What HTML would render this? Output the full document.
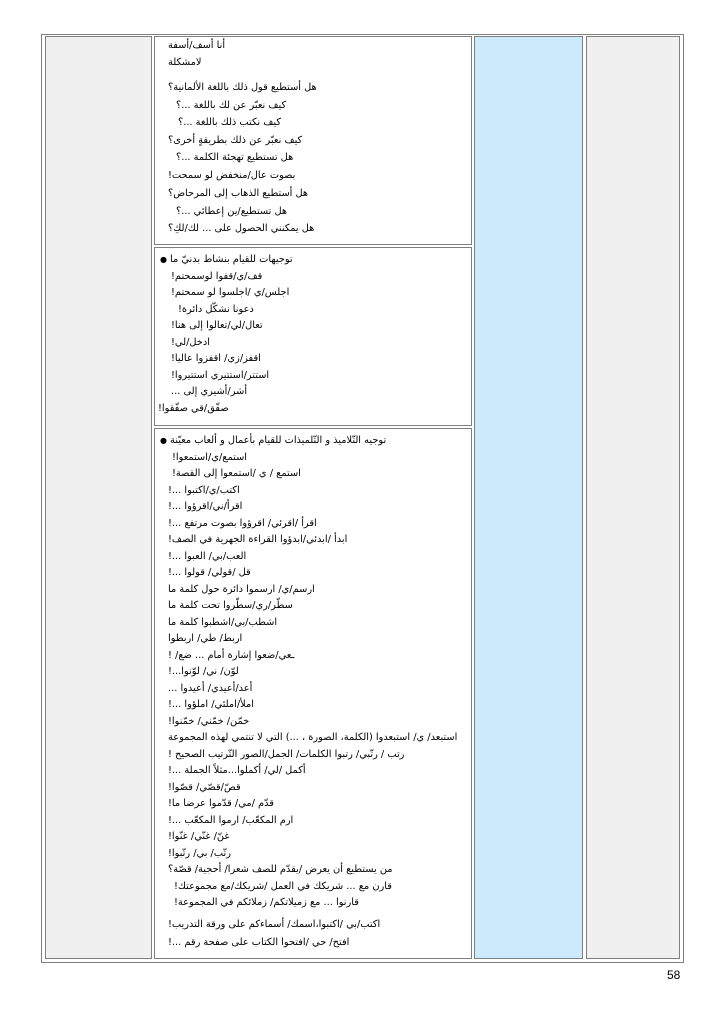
<!DOCTYPE html>
<html><head><meta charset="utf-8"><style>
html,body{margin:0;padding:0;background:#fff;}
body{width:724px;height:1024px;position:relative;overflow:hidden;font-family:"DejaVu Sans","Liberation Sans",sans-serif;}
.b{position:absolute;box-sizing:border-box;border:1px solid #7f7f7f;}
.l{position:absolute;direction:rtl;unicode-bidi:embed;white-space:nowrap;font-size:9.8px;line-height:12px;color:#000;transform:translateY(-6px);}
.dot{position:absolute;font-size:8px;line-height:12px;transform:translateY(-6px);}
</style></head><body>
<div class="b" style="left:41px;top:34px;width:643px;height:929px;"></div>
<div class="b" style="left:45px;top:36px;width:107px;height:923px;background:#f0f0f0;"></div>
<div class="b" style="left:154px;top:36px;width:318px;height:209px;"></div>
<div class="b" style="left:154px;top:247px;width:318px;height:179px;"></div>
<div class="b" style="left:154px;top:428px;width:318px;height:531px;"></div>
<div class="b" style="left:474px;top:36px;width:109px;height:923px;background:#cdeafc;"></div>
<div class="b" style="left:586px;top:36px;width:94px;height:923px;background:#f0f0f0;"></div>

<div class="l" style="left:168px;top:46px">أنا أسف/أسفة</div>
<div class="l" style="left:168px;top:63px">لامشكلة</div>
<div class="l" style="left:168px;top:88px">هل أستطيع قول ذلك باللغة الألمانية؟</div>
<div class="l" style="left:176px;top:105.5px">كيف نعبّر عن لك باللغة ...؟</div>
<div class="l" style="left:178px;top:123px">كيف نكتب ذلك باللغة ...؟</div>
<div class="l" style="left:168px;top:140.5px">كيف نعبّر عن ذلك بطريقةٍ أخرى؟</div>
<div class="l" style="left:176px;top:158px">هل تستطيع تهجئة الكلمة ...؟</div>
<div class="l" style="left:168px;top:175.5px">بصوت عال/منخفض لو سمحت!</div>
<div class="l" style="left:168px;top:194px">هل أستطيع الذهاب إلى المرحاض؟</div>
<div class="l" style="left:176px;top:211.5px">هل تستطيع/ين إعطائي ...؟</div>
<div class="l" style="left:168px;top:229px">هل يمكنني الحصول على ... لك/لكِ؟</div>

<div class="dot" style="left:160px;top:260px">●</div>
<div class="l" style="left:170px;top:260px">توجيهات للقيام بنشاط بدنيّ ما</div>
<div class="l" style="left:171px;top:276.5px">قف/ي/قفوا لوسمحتم!</div>
<div class="l" style="left:171px;top:293px">اجلس/ي /اجلسوا لو سمحتم!</div>
<div class="l" style="left:178px;top:309.5px">دعونا نشكّل دائرة!</div>
<div class="l" style="left:171px;top:326px">تعال/لي/تعالوا إلى هنا!</div>
<div class="l" style="left:171px;top:342.5px">ادخل/لي!</div>
<div class="l" style="left:171px;top:359px">اقفز/زي/ اقفزوا عاليا!</div>
<div class="l" style="left:171px;top:375.5px">استتر/استتيري استتيروا!</div>
<div class="l" style="left:171px;top:392px">أشر/أشيري إلى ...</div>
<div class="l" style="left:158px;top:408.5px">صفّق/قي صفّقوا!</div>

<div class="dot" style="left:160px;top:441px">●</div>
<div class="l" style="left:170px;top:441px">توجيه التّلاميذ و التّلميذات للقيام بأعمال و ألعاب معيّنة</div>
<div class="l" style="left:172px;top:457.5px">استمع/ي/استمعوا!</div>
<div class="l" style="left:172px;top:474px">استمع / ي /استمعوا إلى القصة!</div>
<div class="l" style="left:168px;top:490.5px">اكتب/ي/اكتبوا ...!</div>
<div class="l" style="left:168px;top:507px">اقرأ/ني/اقرؤوا ...!</div>
<div class="l" style="left:168px;top:523.5px">اقرأ /اقرئي/ اقرؤوا بصوت مرتفع ...!</div>
<div class="l" style="left:168px;top:540px">ابدأ /ابدئي/ابدؤوا القراءة الجهرية في الصف!</div>
<div class="l" style="left:168px;top:556.5px">العب/بي/ العبوا ...!</div>
<div class="l" style="left:168px;top:573px">قل /قولي/ قولوا ...!</div>
<div class="l" style="left:168px;top:589.5px">ارسم/ي/ ارسموا دائرة حول كلمة ما</div>
<div class="l" style="left:168px;top:606px">سطّر/ري/سطّروا تحت كلمة ما</div>
<div class="l" style="left:168px;top:622.5px">اشطب/بي/اشطبوا كلمة ما</div>
<div class="l" style="left:168px;top:639px">اربط/ طي/ اربطوا</div>
<div class="l" style="left:168px;top:655.5px">ـعي/ضعوا إشارة أمام ... ضع/ !</div>
<div class="l" style="left:168px;top:672px">لوّن/ ني/ لوّنوا...!</div>
<div class="l" style="left:168px;top:688.5px">أعد/أعيدي/ أعيدوا ...</div>
<div class="l" style="left:168px;top:705px">املأ/املئي/ املؤوا ...!</div>
<div class="l" style="left:168px;top:721.5px">خمّن/ خمّني/ خمّنوا!</div>
<div class="l" style="left:168px;top:738px">استبعد/ ي/ استبعدوا (الكلمة، الصورة ، ...) التي لا تنتمي لهذه المجموعة</div>
<div class="l" style="left:168px;top:754.5px">رتب / رتّبي/ رتبوا الكلمات/ الجمل/الصور التّرتيب الصحيح !</div>
<div class="l" style="left:168px;top:771px">أكمل /لي/ أكملوا...مثلاً الجملة ...!</div>
<div class="l" style="left:168px;top:787.5px">قصّ/قصّي/ قصّوا!</div>
<div class="l" style="left:168px;top:804px">قدّم /مي/ قدّموا عرضا ما!</div>
<div class="l" style="left:168px;top:820.5px">ارم المكعّب/ ارموا المكعّب ...!</div>
<div class="l" style="left:168px;top:837px">غنّ/ غنّي/ غنّوا!</div>
<div class="l" style="left:168px;top:853.5px">رتّب/ بي/ رتّبوا!</div>
<div class="l" style="left:168px;top:870px">من يستطيع أن يعرض /يقدّم للصف شعرا/ أحجية/ قصّة؟</div>
<div class="l" style="left:174px;top:886.5px">قارن مع ... شريكك في العمل /شريكك/مع مجموعتك!</div>
<div class="l" style="left:174px;top:903px">قارنوا ... مع زميلاتكم/ زملائكم في المجموعة!</div>
<div class="l" style="left:168px;top:925px">اكتب/بي /اكتبوا،اسمك/ أسماءكم على ورقة التدريب!</div>
<div class="l" style="left:168px;top:943px">افتح/ حي /افتحوا الكتاب على صفحة رقم ...!</div>

<div style="position:absolute;left:667px;top:968px;font-family:'Liberation Sans',sans-serif;font-size:12px;">58</div>
</body></html>
